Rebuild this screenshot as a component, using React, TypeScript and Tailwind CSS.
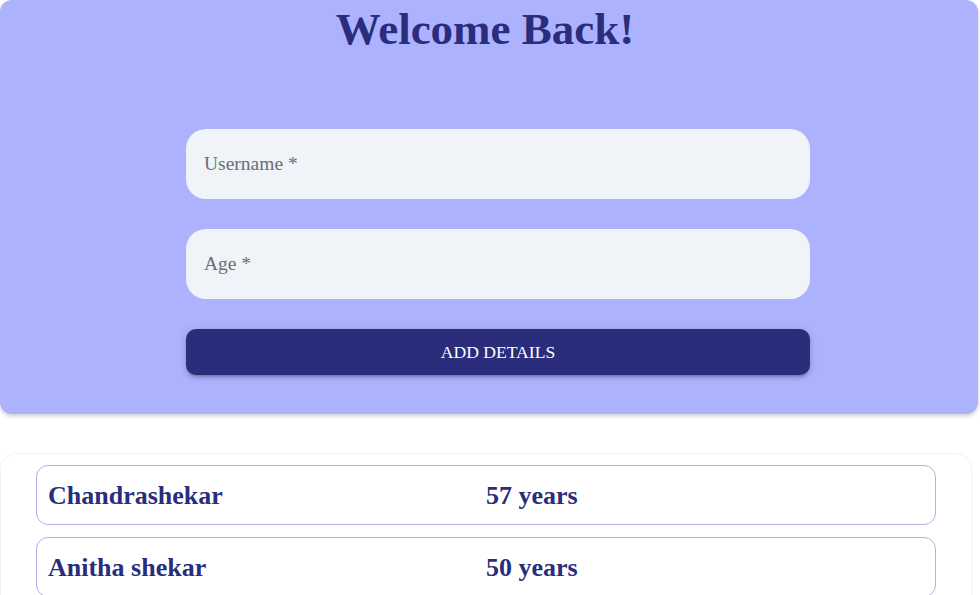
import React from "react";

const serif = { fontFamily: '"Liberation Serif", "Times New Roman", serif' };

export default function App() {
  const people = [
    { name: "Chandrashekar", age: "57 years" },
    { name: "Anitha shekar", age: "50 years" },
  ];
  return (
    <div className="w-[980px] h-[595px] overflow-hidden bg-white" style={serif}>
      <div className="w-[978px] h-[414px] bg-[#adb2ff] rounded-[12px] shadow-[0_2px_4px_rgba(0,0,0,0.2)] pt-[3px] flex flex-col">
        <h1 className="text-[45px] leading-[52px] font-bold text-[#2a2d7c] text-center pr-[8px]">
          Welcome Back!
        </h1>
        <div className="ml-[186px] w-[624px] mt-[74px] flex flex-col gap-[30px]">
          <div className="h-[70px] rounded-[20px] bg-[#f0f4f8] flex items-center pl-[18px] text-[19.5px] text-[#6b6e76]">
            Username *
          </div>
          <div className="h-[70px] rounded-[20px] bg-[#f0f4f8] flex items-center pl-[18px] text-[19.5px] text-[#6b6e76]">
            Age *
          </div>
          <button className="h-[46px] rounded-[10px] bg-[#2a2d7c] text-white text-[17.6px] uppercase shadow-[0_3px_3px_-2px_rgba(0,0,0,0.2),0_3px_4px_0_rgba(0,0,0,0.14),0_1px_8px_0_rgba(0,0,0,0.12)]">
            Add Details
          </button>
        </div>
      </div>
      <div className="mt-[39px] w-[972px] h-[200px] rounded-[16px] border border-[#f3f3f5] shadow-[0_1px_3px_rgba(0,0,0,0.03)] px-[35px] pt-[11px] flex flex-col gap-[12px]">
        {people.map((p) => (
          <div
            key={p.name}
            className="h-[60px] rounded-[12px] border border-[#b0b3e6] px-[11px] grid grid-cols-2 items-center text-[26px] font-bold text-[#2a2d7c]"
          >
            <span>{p.name}</span>
            <span>{p.age}</span>
          </div>
        ))}
      </div>
    </div>
  );
}
